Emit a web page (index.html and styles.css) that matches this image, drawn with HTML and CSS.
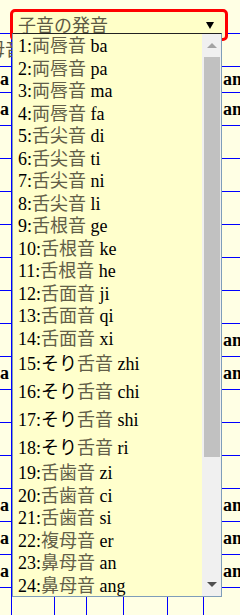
FILE: index.html
```html
<!DOCTYPE html>
<html lang="ja">
<head>
    <meta charset="UTF-8">
    <meta name="viewport" content="width=device-width, initial-scale=1.0">
    <title>子音の発音</title>
    <link rel="stylesheet" href="styles.css">
</head>
<body>
    <div class="page">
        <!-- Background table -->
        <div class="sheet">
            <div class="top-space"></div>
            <div class="row head"><div class="cell"><span class="head-text">母音</span></div><div class="cell"></div><div class="cell"></div><div class="cell"></div><div class="cell"></div><div class="cell"></div><div class="cell"></div></div>
            <div class="row short"><div class="cell">a</div><div class="cell"></div><div class="cell"></div><div class="cell"></div><div class="cell"></div><div class="cell"></div><div class="cell">ang</div></div>
            <div class="row"><div class="cell">a</div><div class="cell"></div><div class="cell"></div><div class="cell"></div><div class="cell"></div><div class="cell"></div><div class="cell">ang</div></div>
            <div class="row"><div class="cell"></div><div class="cell"></div><div class="cell"></div><div class="cell"></div><div class="cell"></div><div class="cell"></div><div class="cell"></div></div>
            <div class="row"><div class="cell"></div><div class="cell"></div><div class="cell"></div><div class="cell"></div><div class="cell"></div><div class="cell"></div><div class="cell"></div></div>
            <div class="row"><div class="cell"></div><div class="cell"></div><div class="cell"></div><div class="cell"></div><div class="cell"></div><div class="cell"></div><div class="cell"></div></div>
            <div class="row"><div class="cell"></div><div class="cell"></div><div class="cell"></div><div class="cell"></div><div class="cell"></div><div class="cell"></div><div class="cell"></div></div>
            <div class="row"><div class="cell"></div><div class="cell"></div><div class="cell"></div><div class="cell"></div><div class="cell"></div><div class="cell"></div><div class="cell"></div></div>
            <div class="row"><div class="cell"></div><div class="cell"></div><div class="cell"></div><div class="cell"></div><div class="cell"></div><div class="cell"></div><div class="cell"></div></div>
            <div class="row"><div class="cell"></div><div class="cell"></div><div class="cell"></div><div class="cell"></div><div class="cell"></div><div class="cell"></div><div class="cell">an</div></div>
            <div class="row"><div class="cell">a</div><div class="cell"></div><div class="cell"></div><div class="cell"></div><div class="cell"></div><div class="cell"></div><div class="cell">ang</div></div>
            <div class="row"><div class="cell"></div><div class="cell"></div><div class="cell"></div><div class="cell"></div><div class="cell"></div><div class="cell"></div><div class="cell"></div></div>
            <div class="row"><div class="cell"></div><div class="cell"></div><div class="cell"></div><div class="cell"></div><div class="cell"></div><div class="cell"></div><div class="cell"></div></div>
            <div class="row"><div class="cell"></div><div class="cell"></div><div class="cell"></div><div class="cell"></div><div class="cell"></div><div class="cell"></div><div class="cell"></div></div>
            <div class="row"><div class="cell">a</div><div class="cell"></div><div class="cell"></div><div class="cell"></div><div class="cell"></div><div class="cell"></div><div class="cell">ang</div></div>
            <div class="row"><div class="cell">a</div><div class="cell"></div><div class="cell"></div><div class="cell"></div><div class="cell"></div><div class="cell"></div><div class="cell">an</div></div>
            <div class="row"><div class="cell">a</div><div class="cell"></div><div class="cell"></div><div class="cell"></div><div class="cell"></div><div class="cell"></div><div class="cell">an</div></div>
            <div class="row"><div class="cell"></div><div class="cell"></div><div class="cell"></div><div class="cell"></div><div class="cell"></div><div class="cell"></div><div class="cell"></div></div>
        </div>

        <!-- Select box -->
        <div class="select">
            <span class="select-label">子音の発音</span>
            <span class="select-arrow"></span>
        </div>

        <!-- Open dropdown list -->
        <div class="dropdown">
            <div class="options">
                <div class="opt">1:<span class="kj">両唇音</span> ba</div>
                <div class="opt">2:<span class="kj">両唇音</span> pa</div>
                <div class="opt">3:<span class="kj">両唇音</span> ma</div>
                <div class="opt">4:<span class="kj">両唇音</span> fa</div>
                <div class="opt">5:<span class="kj">舌尖音</span> di</div>
                <div class="opt">6:<span class="kj">舌尖音</span> ti</div>
                <div class="opt">7:<span class="kj">舌尖音</span> ni</div>
                <div class="opt">8:<span class="kj">舌尖音</span> li</div>
                <div class="opt">9:<span class="kj">舌根音</span> ge</div>
                <div class="opt">10:<span class="kj">舌根音</span> ke</div>
                <div class="opt">11:<span class="kj">舌根音</span> he</div>
                <div class="opt">12:<span class="kj">舌面音</span> ji</div>
                <div class="opt">13:<span class="kj">舌面音</span> qi</div>
                <div class="opt">14:<span class="kj">舌面音</span> xi</div>
                <div class="opt tall">15:そり<span class="kj">舌音</span> zhi</div>
                <div class="opt tall">16:そり<span class="kj">舌音</span> chi</div>
                <div class="opt tall">17:そり<span class="kj">舌音</span> shi</div>
                <div class="opt tall">18:そり<span class="kj">舌音</span> ri</div>
                <div class="opt">19:<span class="kj">舌歯音</span> zi</div>
                <div class="opt">20:<span class="kj">舌歯音</span> ci</div>
                <div class="opt">21:<span class="kj">舌歯音</span> si</div>
                <div class="opt">22:<span class="kj">複母音</span> er</div>
                <div class="opt">23:<span class="kj">鼻母音</span> an</div>
                <div class="opt">24:<span class="kj">鼻母音</span> ang</div>
            </div>
            <div class="scrollbar">
                <div class="sb-btn"><span class="tri-up"></span></div>
                <div class="sb-track"><div class="sb-thumb"></div></div>
                <div class="sb-btn"><span class="tri-down"></span></div>
            </div>
        </div>
    </div>
</body>
</html>
```

FILE: styles.css
```css
* {
    margin: 0;
    padding: 0;
    box-sizing: border-box;
}

body {
    font-family: "Liberation Serif", "Noto Sans CJK JP", serif;
    background-color: #ffffe4;
    overflow: hidden;
}

.page {
    position: relative;
    width: 240px;
    height: 615px;
    overflow: hidden;
}

/* Background table */
.top-space {
    height: 34px;
    border-bottom: 1px solid #0000ff;
}

.row {
    display: grid;
    grid-template-columns: 12px 43px 32px 37px 44px 36px 1fr;
    height: 33px;
    border-bottom: 1px solid #0000ff;
}

.row.short {
    height: 26px;
}

.cell {
    border-right: 1px solid #0000ff;
    display: flex;
    align-items: center;
    font-weight: bold;
    font-size: 18px;
    color: #000;
    white-space: nowrap;
}

.cell:first-child {
    justify-content: flex-end;
    padding-right: 2px;
}

.cell:last-child {
    border-right: none;
    padding-left: 19px;
}

.row.head .cell {
    align-items: flex-start;
    padding-top: 1px;
}

.head-text {
    font-weight: normal;
    color: #5d5a44;
    margin-right: -14px;
}

/* Select box */
.select {
    position: absolute;
    left: 10px;
    top: 9px;
    width: 218px;
    height: 32px;
    border: 3px solid #ff0000;
    border-radius: 5px;
    background-color: #ffffc8;
    display: flex;
    align-items: center;
    justify-content: space-between;
    padding: 0 11px 2px 5px;
}

.select-label {
    font-size: 18px;
    color: #5d5a44;
}

.select-arrow {
    width: 0;
    height: 0;
    border-left: 4px solid transparent;
    border-right: 4px solid transparent;
    border-top: 7px solid #000;
    margin-top: 2px;
}

/* Dropdown list */
.dropdown {
    position: absolute;
    left: 12px;
    top: 33px;
    width: 210px;
    height: 564px;
    background-color: #ffffcc;
    border: 1px solid #7f9db9;
    border-top-color: #222;
    display: flex;
    padding-top: 1px;
}

.options {
    flex: 1;
    overflow: hidden;
}

.opt {
    height: 22.5px;
    line-height: 22px;
    padding-left: 5px;
    font-size: 18px;
    color: #000;
    white-space: nowrap;
    overflow: hidden;
}

.opt.tall {
    height: 28px;
    line-height: 28px;
}

.kj {
    color: #625e48;
}

.scrollbar {
    width: 19px;
    margin-top: -1px;
    background-color: #f0f0f0;
    display: flex;
    flex-direction: column;
}

.sb-btn {
    height: 23px;
    display: flex;
    align-items: center;
    justify-content: center;
}

.sb-track {
    flex: 1;
    padding: 0 1px 0 2px;
}

.sb-thumb {
    height: 400px;
    background-color: #c1c1c1;
}

.tri-up {
    width: 0;
    height: 0;
    border-left: 5px solid transparent;
    border-right: 5px solid transparent;
    border-bottom: 5px solid #a3a3a3;
    margin-left: 1px;
}

.tri-down {
    width: 0;
    height: 0;
    border-left: 5px solid transparent;
    border-right: 5px solid transparent;
    border-top: 5px solid #505050;
    margin-left: 1px;
}
```
